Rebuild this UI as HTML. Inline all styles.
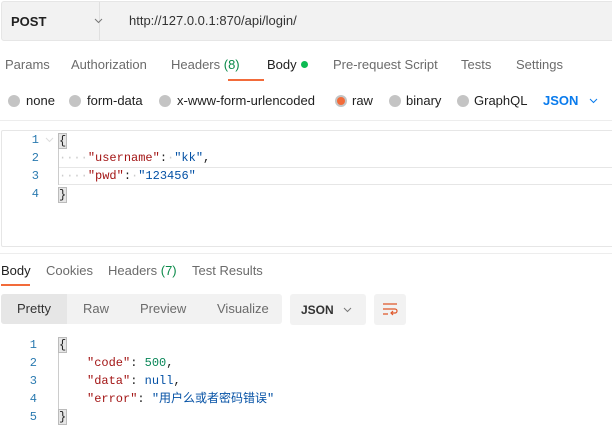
<!DOCTYPE html>
<html><head><meta charset="utf-8"><style>
*{margin:0;padding:0;box-sizing:border-box}
body{width:612px;height:442px;background:#fff;font-family:"Liberation Sans","Noto Sans CJK SC",sans-serif;font-size:13px;color:#212121;position:relative;overflow:hidden}
.a{position:absolute;white-space:nowrap}
.mono{font-family:"Liberation Mono","Noto Sans CJK SC",monospace;font-size:12px}
.mono .a,.mono .ln{line-height:14px}
.g{color:#6b6b6b}
.r{width:12px;height:12px;border-radius:50%;background:#c4c4c4;position:absolute}
.ln{color:#2a7ab0;position:absolute;width:14px;text-align:right}
.k{color:#a31515}.s{color:#0451a5}.n{color:#098658}
.chev{position:absolute}
</style></head><body>
<div class="a" style="left:1px;top:1px;width:620px;height:40px;background:#f2f2f2;border:1px solid #e6e6e6;border-radius:3px"></div>
<div class="a" style="left:99px;top:2px;width:1px;height:38px;background:#e0e0e0"></div>
<div class="a" style="left:11px;top:14px;font-weight:bold;font-size:13px">POST</div>
<svg class="chev" style="left:94px;top:18px" width="9" height="6" viewBox="0 0 9 6" fill="none" stroke="#777" stroke-width="1"><path d="M1 1l3.5 3.5L8 1"/></svg>
<div class="a" style="left:129px;top:13px;color:#333">http://127.0.0.1:870/api/login/</div>

<div class="a g" style="left:5px;top:57px">Params</div>
<div class="a g" style="left:71px;top:57px">Authorization</div>
<div class="a g" style="left:171px;top:57px">Headers <span style="color:#0b8a4a">(8)</span></div>
<div class="a" style="left:267px;top:57px">Body</div>
<div class="a" style="left:301px;top:61px;width:7px;height:7px;border-radius:50%;background:#0cbb52"></div>
<div class="a" style="left:228px;top:79px;width:36px;height:2px;background:#f26b3a"></div>
<div class="a g" style="left:333px;top:57px">Pre-request Script</div>
<div class="a g" style="left:461px;top:57px">Tests</div>
<div class="a g" style="left:516px;top:57px">Settings</div>

<div class="r" style="left:8px;top:95px"></div><div class="a" style="left:26px;top:93px">none</div>
<div class="r" style="left:69px;top:95px"></div><div class="a" style="left:87px;top:93px">form-data</div>
<div class="r" style="left:159px;top:95px"></div><div class="a" style="left:177px;top:93px">x-www-form-urlencoded</div>
<div class="r" style="left:335px;top:95px;background:#c4c4c4"><div style="margin:2px;width:8px;height:8px;border-radius:50%;background:#f26b3a"></div></div><div class="a" style="left:352px;top:93px">raw</div>
<div class="r" style="left:389px;top:95px"></div><div class="a" style="left:406px;top:93px">binary</div>
<div class="r" style="left:457px;top:95px"></div><div class="a" style="left:474px;top:93px">GraphQL</div>
<div class="a" style="left:543px;top:93px;color:#097bed;font-weight:bold">JSON</div>
<svg class="chev" style="left:589px;top:98px" width="9" height="6" viewBox="0 0 9 6" fill="none" stroke="#097bed" stroke-width="1"><path d="M1 1l3.5 3.5L8 1"/></svg>
<div class="a" style="left:0;top:120px;width:612px;height:1px;background:#ededed"></div>

<div class="a" style="left:1px;top:130px;width:620px;height:117px;border:1px solid #e6e6e6;border-radius:2px"></div>
<div class="a" style="left:58px;top:167px;width:560px;height:18px;border-top:1px solid #e6e6e6;border-bottom:1px solid #e6e6e6"></div>
<div class="a" style="left:58px;top:149px;width:1px;height:36px;background:#ccc"></div>
<svg class="chev" style="left:45px;top:137px" width="9" height="6" viewBox="0 0 9 6" fill="none" stroke="#ddd" stroke-width="1"><path d="M1 1l3.5 3.5L8 1"/></svg>
<div class="mono">
<div class="ln" style="left:25px;top:133px">1</div>
<div class="ln" style="left:25px;top:151px">2</div>
<div class="ln" style="left:25px;top:169px">3</div>
<div class="ln" style="left:25px;top:187px">4</div>
<div class="a" style="left:58px;top:133px;background:#e6e6e6;border:1px solid #bbb">{</div>
<div class="a" style="left:58px;top:187px;background:#e6e6e6;border:1px solid #bbb">}</div>
<div class="a" style="left:59px;top:151px"><span style="color:#ccc">····</span><span class="k">"username"</span>:<span style="color:#ccc">·</span><span class="s">"kk"</span>,</div>
<div class="a" style="left:59px;top:169px"><span style="color:#ccc">····</span><span class="k">"pwd"</span>:<span style="color:#ccc">·</span><span class="s">"123456"</span></div>
</div>
<div class="a" style="left:0;top:253px;width:612px;height:1px;background:#ededed"></div>

<div class="a" style="left:1px;top:263px">Body</div>
<div class="a" style="left:1px;top:284px;width:29px;height:2px;background:#f26b3a"></div>
<div class="a g" style="left:46px;top:263px">Cookies</div>
<div class="a g" style="left:108px;top:263px">Headers <span style="color:#0b8a4a">(7)</span></div>
<div class="a g" style="left:192px;top:263px">Test Results</div>

<div class="a" style="left:1px;top:294px;width:281px;height:30px;background:#f2f2f2;border-radius:3px"></div>
<div class="a" style="left:1px;top:294px;width:66px;height:30px;background:#e6e6e6;border-radius:3px 0 0 3px"></div>
<div class="a" style="left:17px;top:301px;color:#333">Pretty</div>
<div class="a g" style="left:83px;top:301px">Raw</div>
<div class="a g" style="left:140px;top:301px">Preview</div>
<div class="a g" style="left:217px;top:301px">Visualize</div>
<div class="a" style="left:290px;top:294px;width:76px;height:31px;background:#f2f2f2;border-radius:3px"></div>
<div class="a" style="left:301px;top:303px;font-weight:bold;font-size:12px;color:#333">JSON</div>
<svg class="chev" style="left:343px;top:307px" width="9" height="6" viewBox="0 0 9 6" fill="none" stroke="#777" stroke-width="1"><path d="M1 1l3.5 3.5L8 1"/></svg>
<div class="a" style="left:374px;top:294px;width:32px;height:31px;background:#f2f2f2;border-radius:3px"></div>
<svg class="a" style="left:382px;top:302px" width="16" height="14" viewBox="0 0 16 14" fill="none" stroke="#e0572a" stroke-width="1.2"><path d="M1 2h14M1 7h12a2 2 0 0 1 0 4H9M11 9l-2 2 2 2M1 12h5"/></svg>

<div class="mono">
<div class="ln" style="left:23px;top:338px">1</div>
<div class="ln" style="left:23px;top:356px">2</div>
<div class="ln" style="left:23px;top:374px">3</div>
<div class="ln" style="left:23px;top:392px">4</div>
<div class="ln" style="left:23px;top:410px">5</div>
<div class="a" style="left:58px;top:337px;background:#e6e6e6;border:1px solid #bbb">{</div>
<div class="a" style="left:58px;top:409px;background:#e6e6e6;border:1px solid #bbb">}</div>
<div class="a" style="left:58px;top:353px;width:1px;height:56px;background:#ccc"></div>
<div class="a" style="left:87px;top:356px"><span class="k">"code"</span>: <span class="n">500</span>,</div>
<div class="a" style="left:87px;top:374px"><span class="k">"data"</span>: <span class="s">null</span>,</div>
<div class="a" style="left:87px;top:392px"><span class="k">"error"</span>: <span class="s">"用户么或者密码错误"</span></div>
</div>
</body></html>
